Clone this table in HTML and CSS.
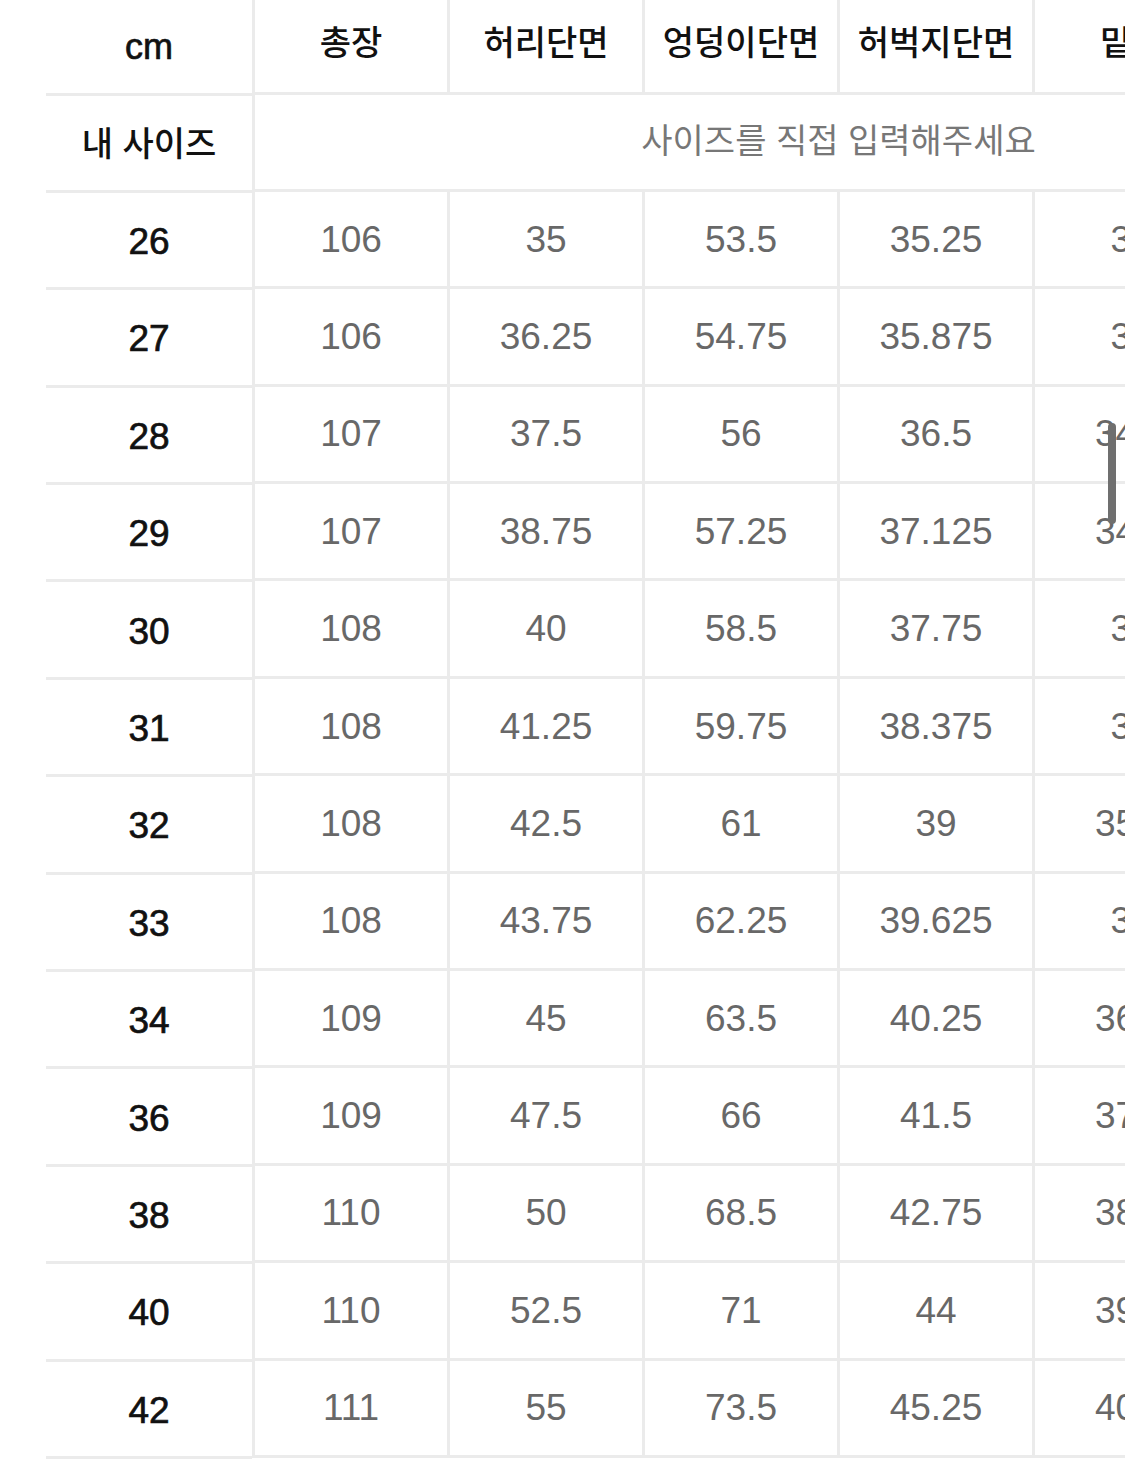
FILE: index.html
```html
<!DOCTYPE html>
<html lang="ko">
<head>
<meta charset="utf-8">
<title>사이즈표</title>
<link rel="stylesheet" href="styles.css">
</head>
<body>
<div class="sizetable">
  <div class="fixed-col">
    <div class="fcell head">cm</div>
    <div class="fcell mine">내 사이즈</div>
    <div class="fcell num">26</div>
    <div class="fcell num">27</div>
    <div class="fcell num">28</div>
    <div class="fcell num">29</div>
    <div class="fcell num">30</div>
    <div class="fcell num">31</div>
    <div class="fcell num">32</div>
    <div class="fcell num">33</div>
    <div class="fcell num">34</div>
    <div class="fcell num">36</div>
    <div class="fcell num">38</div>
    <div class="fcell num">40</div>
    <div class="fcell num">42</div>
  </div>
  <div class="scroll">
    <div class="grid">
      <div class="cell head">총장</div>
      <div class="cell head">허리단면</div>
      <div class="cell head">엉덩이단면</div>
      <div class="cell head">허벅지단면</div>
      <div class="cell head">밑위</div>
      <div class="cell head">밑단단면</div>

      <div class="cell input">사이즈를 직접 입력해주세요</div>

      <div class="cell">106</div><div class="cell">35</div><div class="cell">53.5</div><div class="cell">35.25</div><div class="cell">33</div><div class="cell">19</div>
      <div class="cell">106</div><div class="cell">36.25</div><div class="cell">54.75</div><div class="cell">35.875</div><div class="cell">34</div><div class="cell">19.5</div>
      <div class="cell">107</div><div class="cell">37.5</div><div class="cell">56</div><div class="cell">36.5</div><div class="cell">34.5</div><div class="cell">20</div>
      <div class="cell">107</div><div class="cell">38.75</div><div class="cell">57.25</div><div class="cell">37.125</div><div class="cell">34.5</div><div class="cell">20.5</div>
      <div class="cell">108</div><div class="cell">40</div><div class="cell">58.5</div><div class="cell">37.75</div><div class="cell">35</div><div class="cell">21</div>
      <div class="cell">108</div><div class="cell">41.25</div><div class="cell">59.75</div><div class="cell">38.375</div><div class="cell">35</div><div class="cell">21.5</div>
      <div class="cell">108</div><div class="cell">42.5</div><div class="cell">61</div><div class="cell">39</div><div class="cell">35.5</div><div class="cell">22</div>
      <div class="cell">108</div><div class="cell">43.75</div><div class="cell">62.25</div><div class="cell">39.625</div><div class="cell">36</div><div class="cell">22.5</div>
      <div class="cell">109</div><div class="cell">45</div><div class="cell">63.5</div><div class="cell">40.25</div><div class="cell">36.5</div><div class="cell">23</div>
      <div class="cell">109</div><div class="cell">47.5</div><div class="cell">66</div><div class="cell">41.5</div><div class="cell">37.5</div><div class="cell">24</div>
      <div class="cell">110</div><div class="cell">50</div><div class="cell">68.5</div><div class="cell">42.75</div><div class="cell">38.5</div><div class="cell">25</div>
      <div class="cell">110</div><div class="cell">52.5</div><div class="cell">71</div><div class="cell">44</div><div class="cell">39.5</div><div class="cell">26</div>
      <div class="cell">111</div><div class="cell">55</div><div class="cell">73.5</div><div class="cell">45.25</div><div class="cell">40.5</div><div class="cell">27</div>
    </div>
    <div class="scrollbar"></div>
  </div>
</div>
</body>
</html>
```

FILE: styles.css
```css
html, body {
  margin: 0;
  padding: 0;
  background: #ffffff;
}

body {
  width: 1125px;
  height: 1473px;
  overflow: hidden;
  font-family: "Liberation Sans", "Noto Sans CJK KR", sans-serif;
}

.sizetable {
  display: flex;
  padding-left: 46px;
}

.fixed-col {
  width: 206px;
  flex: none;
  display: grid;
  grid-template-rows: 95.5px repeat(14, 97.4px);
}

.fcell {
  box-sizing: border-box;
  border-bottom: 3px solid #ebebeb;
  display: flex;
  align-items: center;
  justify-content: center;
  color: #111111;
}

.fcell.head {
  font-size: 36px;
  font-weight: 400;
  -webkit-text-stroke: 0.7px #111111;
  padding-top: 2px;
}

.fcell.mine {
  font-family: "Noto Sans CJK KR", sans-serif;
  font-size: 34px;
  font-weight: 500;
  padding-bottom: 2px;
}

.fcell.num {
  font-size: 37px;
  font-weight: 400;
  -webkit-text-stroke: 0.7px #111111;
  padding-top: 4px;
}

.scroll {
  position: relative;
  flex: 1;
  overflow: hidden;
}

.grid {
  display: grid;
  grid-template-columns: repeat(6, 195px);
  grid-template-rows: 94.5px repeat(14, 97.4px);
  width: 1170px;
}

.cell {
  box-sizing: border-box;
  border-left: 3px solid #ebebeb;
  border-bottom: 3px solid #ebebeb;
  display: flex;
  align-items: center;
  justify-content: center;
  font-size: 37px;
  font-weight: 400;
  color: #686868;
  white-space: nowrap;
  padding-top: 1px;
}

.cell.head {
  font-family: "Noto Sans CJK KR", sans-serif;
  font-size: 34px;
  font-weight: 500;
  color: #111111;
  padding-top: 0;
  padding-bottom: 10px;
}

.cell.input {
  grid-column: 1 / span 6;
  font-family: "Noto Sans CJK KR", sans-serif;
  font-size: 34px;
  font-weight: 400;
  color: #777777;
  padding-top: 0;
  padding-bottom: 6px;
}

.scrollbar {
  position: absolute;
  left: 856px;
  top: 423px;
  width: 8px;
  height: 101px;
  border-radius: 4px;
  background: #6f6f6f;
}
```
